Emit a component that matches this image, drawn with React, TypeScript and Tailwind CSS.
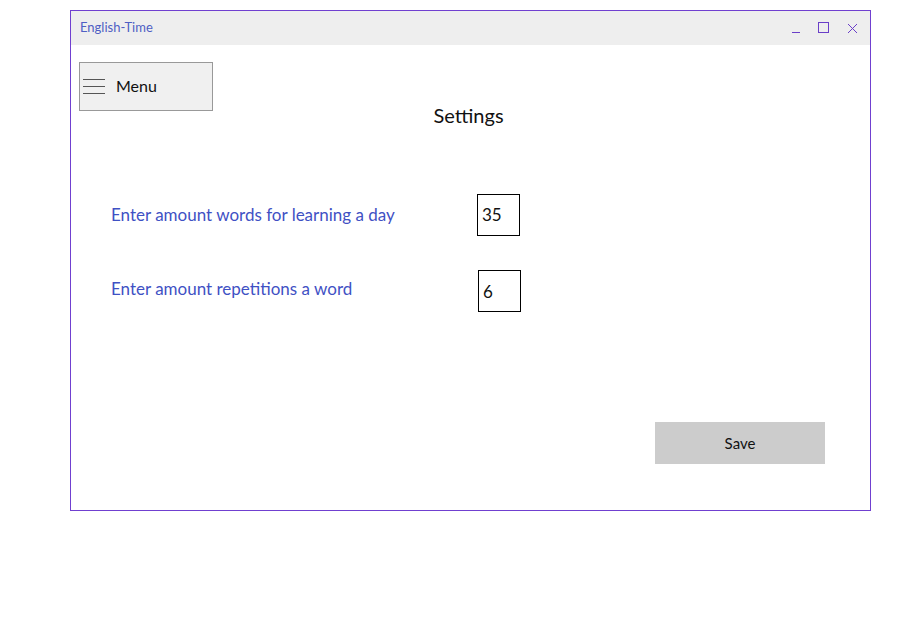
import { useState } from "react";

const font = { fontFamily: '"Lato", "Open Sans", sans-serif' };

function Hamburger() {
  return (
    <div className="flex flex-col gap-[6px] w-[22px]">
      <span className="block h-px bg-[#555]" />
      <span className="block h-px bg-[#555]" />
      <span className="block h-px bg-[#555]" />
    </div>
  );
}

export default function App() {
  const [words, setWords] = useState("35");
  const [reps, setReps] = useState("6");

  return (
    <div className="w-[920px] h-[620px] bg-white pl-[70px] pt-[10px]" style={font}>
      <div className="w-[801px] h-[501px] border border-[#7040d0] flex flex-col">
        {/* title bar */}
        <div className="h-[34px] bg-[#eeeeee] flex items-center pl-[9px] pr-[12px]">
          <span className="text-[13px] text-[#4f5fc4]">English-Time</span>
          <div className="ml-auto flex items-center gap-[17px] text-[#6a3fc8]">
            <svg width="10" height="12" viewBox="0 0 10 12">
              <line x1="1" y1="10.5" x2="9" y2="10.5" stroke="currentColor" strokeWidth="1" />
            </svg>
            <svg width="12" height="12" viewBox="0 0 12 12">
              <rect x="0.5" y="0.5" width="10" height="10" fill="none" stroke="currentColor" strokeWidth="1" />
            </svg>
            <svg width="11" height="11" viewBox="0 0 11 11">
              <path d="M1 1L10 10M10 1L1 10" stroke="currentColor" strokeWidth="1" />
            </svg>
          </div>
        </div>

        {/* body */}
        <div className="flex-1 flex flex-col">
          <button className="ml-[8px] mt-[17px] w-[134px] h-[49px] bg-[#f0f0f0] border border-[#999] flex items-center pl-[3px] gap-[11px] text-[16px] text-[#111]">
            <Hamburger />
            <span className="-mt-[2px]">Menu</span>
          </button>
          <h1 className="-mt-[10px] text-center text-[20px] leading-[28px] text-[#111] pr-[4px]">Settings</h1>

          <div className="mt-[65px] pl-[40px] flex items-center h-[42px]">
            <span className="w-[366px] text-[17px] text-[#3f51c4]">Enter amount words for learning a day</span>
            <input
              value={words}
              onChange={(e) => setWords(e.target.value)}
              className="w-[43px] h-[42px] border border-black px-[4px] pb-[2px] text-[17px] text-[#111] outline-none"
            />
          </div>

          <div className="mt-[34px] pl-[40px] flex items-center h-[42px]">
            <span className="w-[367px] text-[17px] text-[#3f51c4] -mt-[4px]">Enter amount repetitions a word</span>
            <input
              value={reps}
              onChange={(e) => setReps(e.target.value)}
              className="w-[43px] h-[42px] border border-black px-[4px] text-[17px] text-[#111] outline-none"
            />
          </div>

          <div className="mt-[110px] flex justify-end pr-[45px]">
            <button className="w-[170px] h-[42px] bg-[#cccccc] text-[15px] text-[#111]">Save</button>
          </div>
        </div>
      </div>
    </div>
  );
}
